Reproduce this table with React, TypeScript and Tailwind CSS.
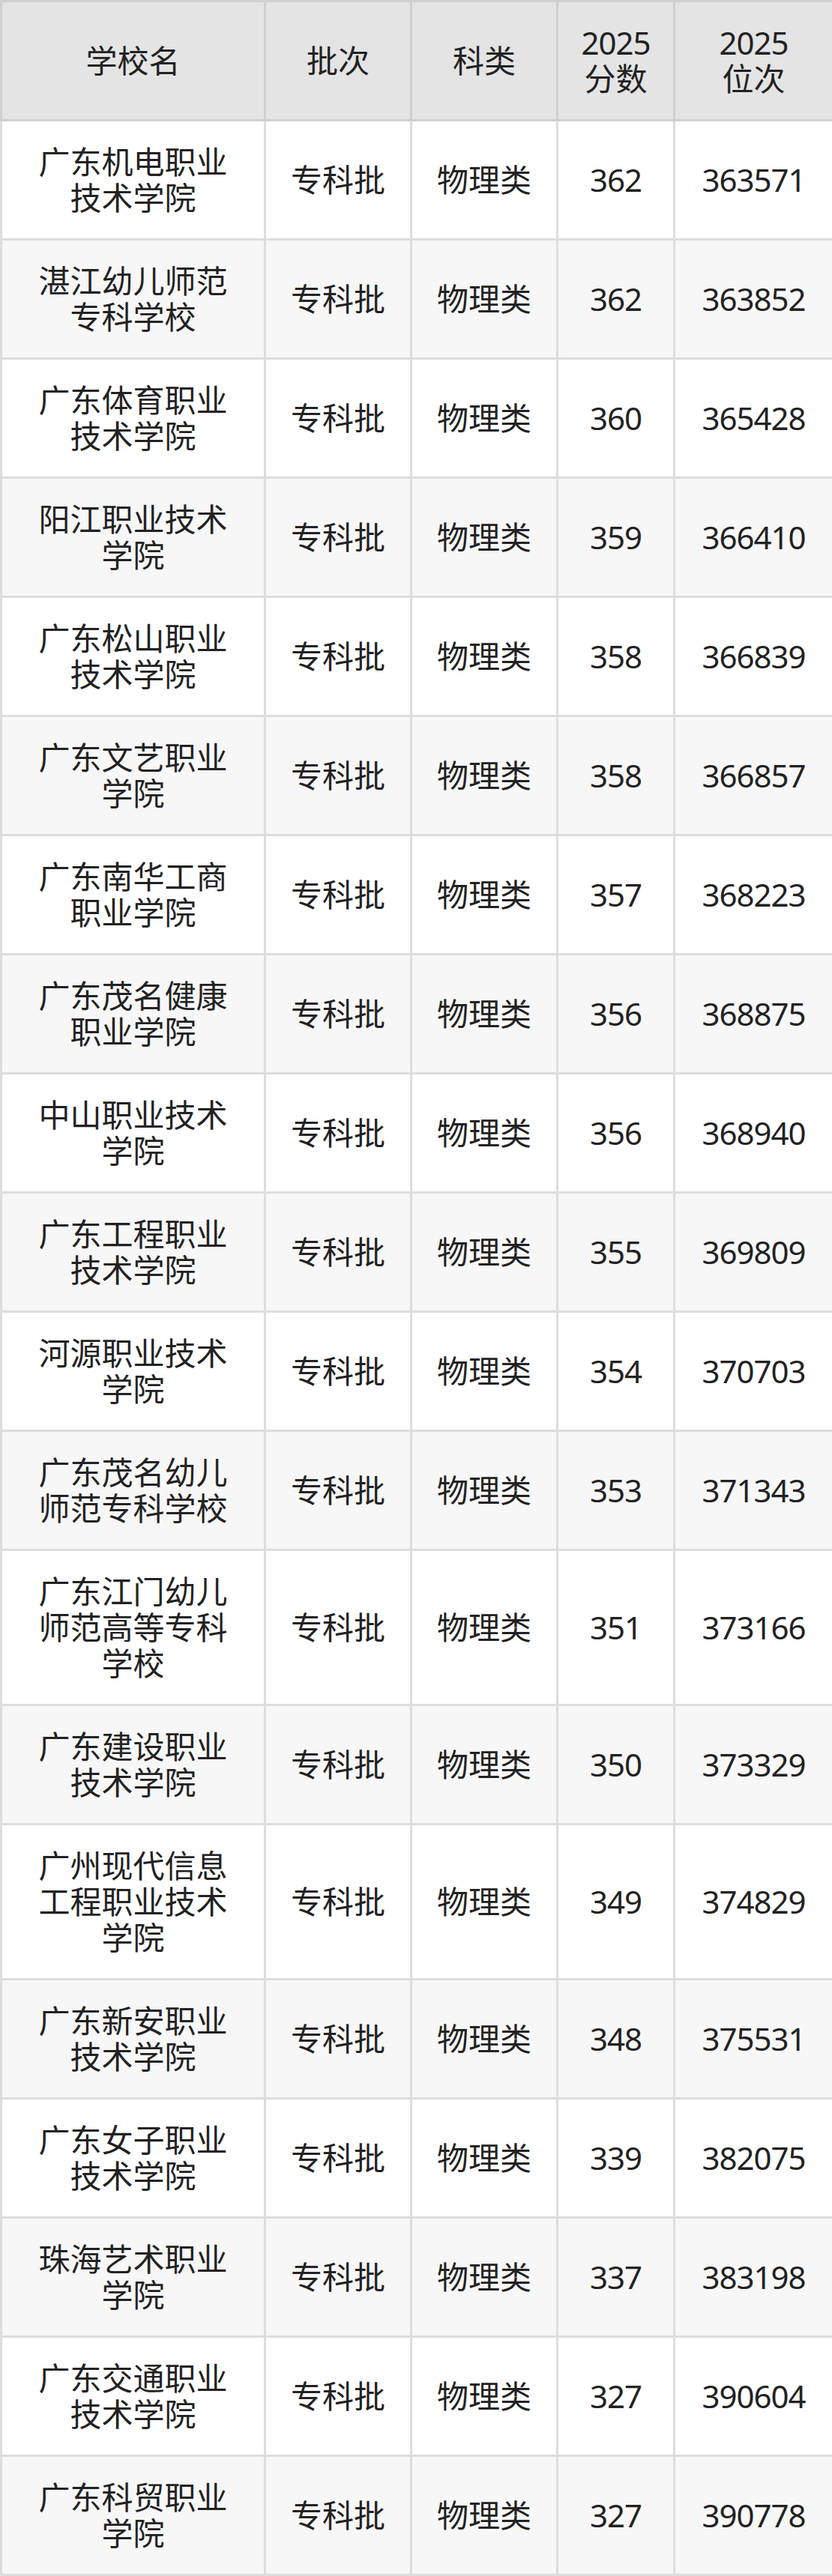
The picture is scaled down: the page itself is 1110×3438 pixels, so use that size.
import React from "react";

const rows: [string, string, string][] = [
  ["广东机电职业技术学院", "362", "363571"],
  ["湛江幼儿师范专科学校", "362", "363852"],
  ["广东体育职业技术学院", "360", "365428"],
  ["阳江职业技术学院", "359", "366410"],
  ["广东松山职业技术学院", "358", "366839"],
  ["广东文艺职业学院", "358", "366857"],
  ["广东南华工商职业学院", "357", "368223"],
  ["广东茂名健康职业学院", "356", "368875"],
  ["中山职业技术学院", "356", "368940"],
  ["广东工程职业技术学院", "355", "369809"],
  ["河源职业技术学院", "354", "370703"],
  ["广东茂名幼儿师范专科学校", "353", "371343"],
  ["广东江门幼儿师范高等专科学校", "351", "373166"],
  ["广东建设职业技术学院", "350", "373329"],
  ["广州现代信息工程职业技术学院", "349", "374829"],
  ["广东新安职业技术学院", "348", "375531"],
  ["广东女子职业技术学院", "339", "382075"],
  ["珠海艺术职业学院", "337", "383198"],
  ["广东交通职业技术学院", "327", "390604"],
  ["广东科贸职业学院", "327", "390778"],
];

const th =
  "border-[3px] border-[#d0d0d0] bg-[#e4e4e4] py-[30px] px-[20px] text-center align-middle font-normal";
const td = "border-[3px] border-[#dddddd] py-[30px] px-[20px] text-center align-middle";

export default function App() {
  return (
    <div
      className="w-[1110px] bg-white text-[#222222] text-[42px] leading-[48px]"
      style={{ fontFamily: '"Noto Sans", "Noto Sans CJK SC", sans-serif' }}
    >
      <table className="w-[1110px] border-collapse table-fixed">
        <colgroup>
          <col className="w-[352px]" />
          <col className="w-[195px]" />
          <col className="w-[195px]" />
          <col className="w-[156px]" />
          <col className="w-[212px]" />
        </colgroup>
        <thead>
          <tr>
            <th className={th + " !px-[30px]"}>学校名</th>
            <th className={th}>批次</th>
            <th className={th}>科类</th>
            <th className={th}>
              <span className="tracking-[-1px]">2025</span>
              <br />
              分数
            </th>
            <th className={th}>
              <span className="tracking-[-1px]">2025</span>
              <br />
              位次
            </th>
          </tr>
        </thead>
        <tbody>
          {rows.map(([name, score, rank], i) => (
            <tr key={name} className={i % 2 === 1 ? "bg-[#f7f7f7]" : "bg-white"}>
              <td className={td + " !px-[30px]"}>{name}</td>
              <td className={td}>专科批</td>
              <td className={td}>物理类</td>
              <td className={td + " tracking-[-1px]"}>{score}</td>
              <td className={td + " tracking-[-1px]"}>{rank}</td>
            </tr>
          ))}
        </tbody>
      </table>
    </div>
  );
}
